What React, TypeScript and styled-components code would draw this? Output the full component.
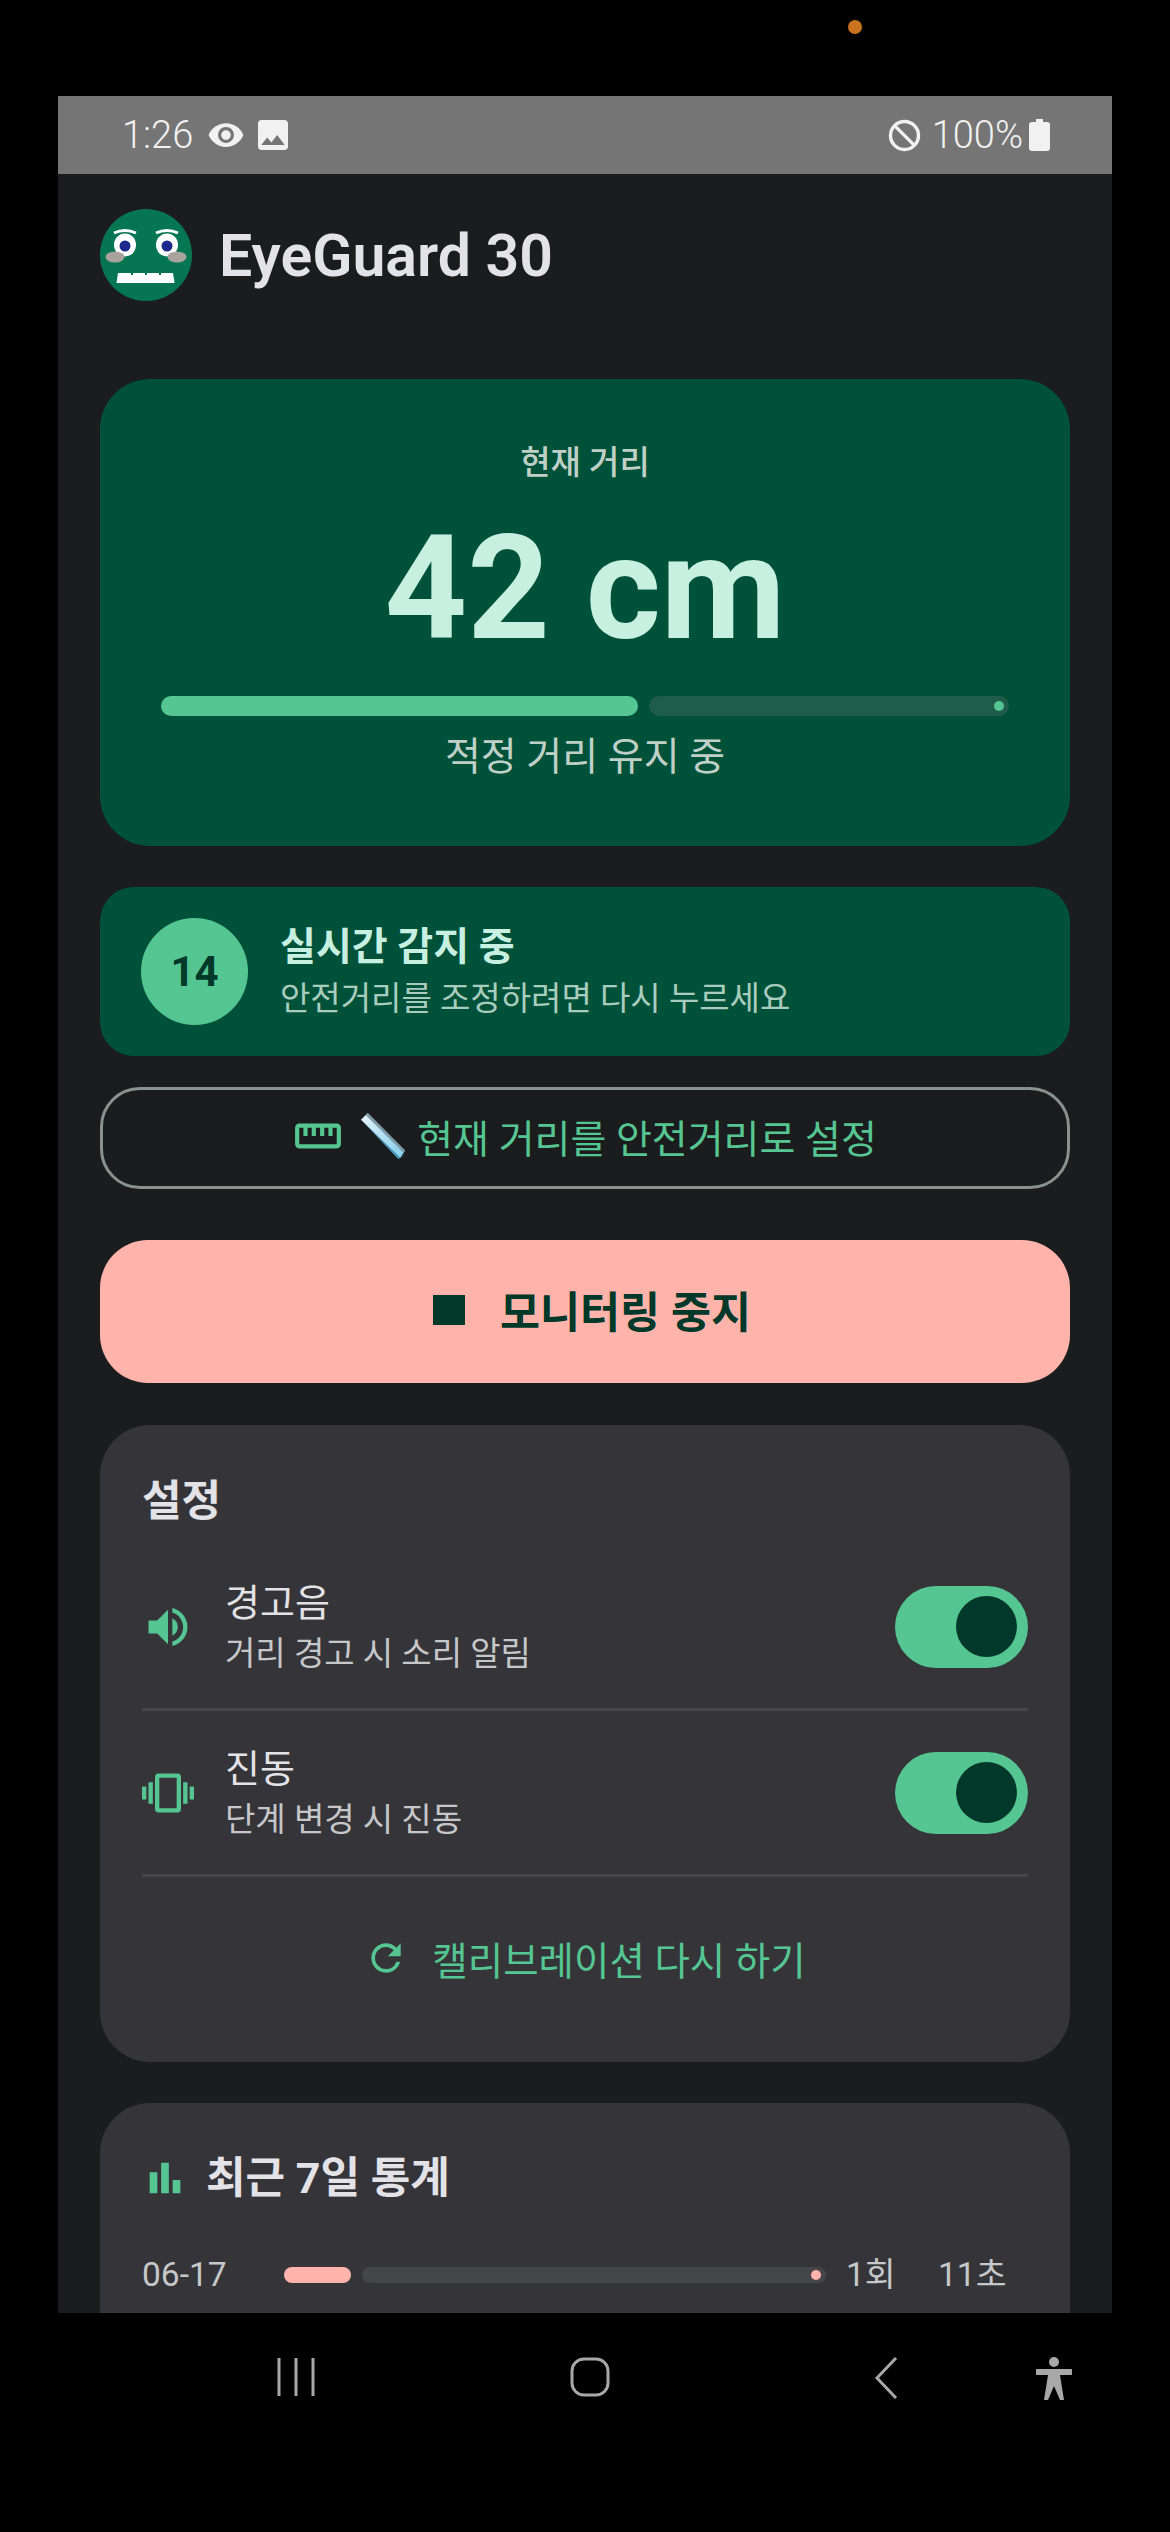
import React from "react";
import styled, { createGlobalStyle } from "styled-components";
import {
  MdBarChart,
  MdImage,
  MdOutlineStraighten,
  MdRefresh,
  MdVibration,
  MdVisibility,
  MdVolumeUp,
} from "react-icons/md";

const GlobalStyle = createGlobalStyle`
  html, body {
    margin: 0;
    padding: 0;
    background: #000;
    font-family: Roboto, "Noto Sans CJK KR", sans-serif;
  }
`;

const Page = styled.div`
  width: 1170px;
  height: 2532px;
  background: #000;
  overflow: hidden;
`;

const Bezel = styled.div`
  height: 96px;
  padding: 20px 0 0 848px;
  box-sizing: border-box;
`;

const CameraDot = styled.div`
  width: 14px;
  height: 14px;
  border-radius: 50%;
  background: #c9731f;
`;

const Phone = styled.div`
  width: 1054px;
  height: 2217px;
  margin-left: 58px;
  overflow: hidden;
  background: #1b1c1e;
`;

const StatusBar = styled.div`
  height: 78px;
  background: #757575;
  color: #f1f1f1;
  display: flex;
  align-items: center;
  justify-content: space-between;
  padding: 0 62px 0 64px;
  font-size: 38px;
  font-weight: 300;
`;

const StatusGroup = styled.div`
  display: flex;
  align-items: center;
  gap: 8px;
`;

const StatusTime = styled.span`
  margin-right: 6px;
`;

const StatusLevel = styled.span`
  margin: 0 -2px 0 3px;
`;

const Main = styled.main`
  padding: 35px 42px 0;
`;

const Header = styled.header`
  display: flex;
  align-items: center;
  gap: 27px;
  margin-bottom: 78px;
`;

const AppTitle = styled.h1`
  margin: 0;
  font-size: 59px;
  font-weight: 600;
  color: #e3e2e6;
`;

const HeroCard = styled.section`
  height: 467px;
  box-sizing: border-box;
  padding: 62px 61px 0;
  border-radius: 50px;
  background: #00513a;
  text-align: center;
`;

const HeroLabel = styled.div`
  font-size: 33px;
  line-height: 44px;
  font-weight: 500;
  color: #bfd0c7;
`;

const HeroValue = styled.div`
  margin-top: 19px;
  font-size: 144px;
  line-height: 170px;
  font-weight: 700;
  color: #c7f0e0;
`;

const Meter = styled.div<{ $gap: number }>`
  display: flex;
  gap: ${(p) => p.$gap}px;
`;

const MeterFill = styled.div<{ $color: string; $height: number; $width: number }>`
  width: ${(p) => p.$width}px;
  height: ${(p) => p.$height}px;
  border-radius: ${(p) => p.$height / 2}px;
  background: ${(p) => p.$color};
`;

const MeterTrack = styled.div<{ $color: string; $height: number }>`
  flex: 1;
  height: ${(p) => p.$height}px;
  border-radius: ${(p) => p.$height / 2}px;
  background: ${(p) => p.$color};
  display: flex;
  align-items: center;
  justify-content: flex-end;
  padding-right: 5px;
`;

const MeterStop = styled.div<{ $color: string }>`
  width: 10px;
  height: 10px;
  border-radius: 50%;
  background: ${(p) => p.$color};
`;

const HeroMeter = styled.div`
  margin-top: 22px;
`;

const HeroCaption = styled.div`
  margin-top: 16px;
  font-size: 39px;
  line-height: 50px;
  color: #bfd0c7;
`;

const DetectCard = styled.section`
  height: 169px;
  box-sizing: border-box;
  margin-top: 41px;
  padding: 0 41px;
  display: flex;
  align-items: center;
  gap: 32px;
  border-radius: 34px;
  background: #00513a;
`;

const CountBadge = styled.div`
  width: 107px;
  height: 107px;
  border-radius: 50%;
  background: #55c692;
  color: #00382a;
  display: flex;
  align-items: center;
  justify-content: center;
  font-size: 42px;
  font-weight: 700;
`;

const DetectText = styled.div`
  padding-top: 3px;
`;

const DetectTitle = styled.div`
  font-size: 39px;
  line-height: 52px;
  font-weight: 600;
  color: #c7f0e0;
`;

const DetectHint = styled.div`
  font-size: 33px;
  line-height: 52px;
  color: #a9cdbd;
`;

const OutlineButton = styled.button`
  display: flex;
  width: 100%;
  height: 102px;
  margin-top: 31px;
  padding: 0 0 5px;
  align-items: center;
  justify-content: center;
  gap: 17px;
  border: 3px solid #8b918d;
  border-radius: 40px;
  background: transparent;
  color: #55c692;
  font-family: inherit;
  font-size: 39px;
`;

const OutlineLabel = styled.span`
  margin-left: -6px;
`;

const StopButton = styled.button`
  display: flex;
  width: 100%;
  height: 143px;
  margin-top: 51px;
  padding: 0 0 4px 14px;
  align-items: center;
  justify-content: center;
  gap: 35px;
  border: none;
  border-radius: 48px;
  background: #ffb4ab;
  color: #00382a;
  font-family: inherit;
  font-size: 43.5px;
  font-weight: 600;
`;

const StopMark = styled.span`
  width: 32px;
  height: 30px;
  background: #00382a;
`;

const Card = styled.section<{ $top: number; $padTop: number }>`
  margin-top: ${(p) => p.$top}px;
  padding: ${(p) => p.$padTop}px 42px 0;
  border-radius: 50px;
  background: #343439;
`;

const CardTitle = styled.h2<{ $gap: number; $bottom: number }>`
  display: flex;
  align-items: center;
  gap: ${(p) => p.$gap}px;
  margin: 0 0 ${(p) => p.$bottom}px;
  font-size: 43px;
  line-height: 64px;
  font-weight: 700;
  color: #e3e2e6;
`;

const ToggleRow = styled.div`
  height: 163px;
  display: flex;
  align-items: center;
  gap: 31px;
  border-bottom: 3px solid #45454a;
`;

const RowIcon = styled.div<{ $width: number }>`
  width: ${(p) => p.$width}px;
  color: #55c692;
  display: flex;
  justify-content: center;
`;

const RowText = styled.div`
  flex: 1;
  padding-top: 3px;
`;

const RowLabel = styled.div`
  font-size: 38px;
  line-height: 53px;
  color: #e3e2e6;
`;

const RowHint = styled.div`
  margin-top: -3px;
  font-size: 33px;
  line-height: 53px;
  color: #c6c7c9;
`;

const Toggle = styled.div`
  width: 133px;
  height: 82px;
  box-sizing: border-box;
  padding-right: 11px;
  border-radius: 41px;
  background: #55c692;
  display: flex;
  align-items: center;
  justify-content: flex-end;
`;

const ToggleThumb = styled.div`
  width: 61px;
  height: 61px;
  border-radius: 50%;
  background: #00382a;
`;

const Recalibrate = styled.div`
  height: 162px;
  padding-bottom: 23px;
  display: flex;
  align-items: center;
  justify-content: center;
  gap: 24px;
  color: #55c692;
  font-size: 38.5px;
`;

const StatRow = styled.div`
  margin-top: 40px;
  padding-bottom: 140px;
  display: flex;
  align-items: center;
  font-size: 33.5px;
  line-height: 50px;
  color: #c6c7c9;
`;

const StatDate = styled.div`
  width: 142px;
`;

const StatMeter = styled.div`
  width: 542px;
`;

const StatCount = styled.div`
  width: 92px;
  margin-left: 20px;
`;

const NavBar = styled.nav`
  height: 219px;
  box-sizing: border-box;
  display: flex;
  color: #a8a8a8;
  padding: 44px 0 0 277px;
  align-items: flex-start;
`;

const NavSlot = styled.div<{ $width: number }>`
  width: ${(p) => p.$width}px;
  flex: none;
`;

const RulerEmoji = () => (
  <svg width="46" height="50" viewBox="0 0 48 50">
    <defs>
      <linearGradient id="rulerFace" x1="0" y1="0" x2="1" y2="0.3">
        <stop offset="0" stopColor="#e6f4fa" />
        <stop offset="1" stopColor="#8fd3f0" />
      </linearGradient>
    </defs>
    <path d="M1 8 L8 1 L47 40 L42 48 Z" fill="url(#rulerFace)" />
    <path d="M1 8 L42 48 L47 44 L45 46 L40 49 Z" fill="#4aa3cf" />
    <path d="M8 1 L47 40 L45 42 L6 3 Z" fill="#7d97a3" />
  </svg>
);

const LogoMark = () => (
  <svg width="92" height="92" viewBox="0 0 92 92">
    <circle cx="46" cy="46" r="46" fill="#067652" />
    <ellipse cx="25" cy="36" rx="11" ry="11.5" fill="#fff" />
    <ellipse cx="67" cy="36" rx="11" ry="11.5" fill="#fff" />
    <circle cx="25" cy="37" r="5.5" fill="#1b2a8c" />
    <circle cx="67" cy="37" r="5.5" fill="#1b2a8c" />
    <path d="M14 24 Q25 19 36 24" stroke="#fff" strokeWidth="3" fill="none" />
    <path d="M56 24 Q67 19 78 24" stroke="#fff" strokeWidth="3" fill="none" />
    <ellipse cx="15" cy="48" rx="9.5" ry="5.5" fill="#a9a29d" />
    <ellipse cx="77" cy="48" rx="9.5" ry="5.5" fill="#a9a29d" />
    <path d="M18 64 h13 v2 h2 v-2 h12 v2 h2 v-2 h12 v2 h2 v-2 h12 l1.5 10 h-58 z" fill="#fff" />
  </svg>
);

const BlockedIcon = () => (
  <svg width="33" height="33" viewBox="0 0 33 33" fill="none" stroke="#f1f1f1" strokeWidth="3.4">
    <circle cx="16.5" cy="16.5" r="14" />
    <path d="M6.6 6.6 L26.4 26.4" />
  </svg>
);

const BatteryIcon = () => (
  <svg width="21" height="32" viewBox="0 0 21 32" fill="#f1f1f1">
    <path d="M7 0 h7 v3 h4 a3 3 0 0 1 3 3 v23 a3 3 0 0 1 -3 3 h-15 a3 3 0 0 1 -3 -3 v-23 a3 3 0 0 1 3 -3 h4 z" />
  </svg>
);

const RecentsIcon = () => (
  <svg width="38" height="40" viewBox="0 0 38 40" fill="none" stroke="currentColor" strokeWidth="3">
    <path d="M2 1 V39 M19 1 V39 M36 1 V39" />
  </svg>
);

const HomeIcon = () => (
  <svg width="40" height="40" viewBox="0 0 40 40" fill="none" stroke="currentColor" strokeWidth="3">
    <rect x="2" y="2" width="36" height="36" rx="12" />
  </svg>
);

const BackIcon = () => (
  <svg width="24" height="42" viewBox="0 0 24 42" fill="none" stroke="currentColor" strokeWidth="3">
    <path d="M22 1 L3 21 L22 41" />
  </svg>
);

const AccessibilityIcon = () => (
  <svg width="36" height="44" viewBox="0 0 36 44" fill="currentColor">
    <circle cx="18" cy="5" r="5" />
    <path d="M1 12 h34 a1.5 3 0 0 1 0 6 h-11 l4 25 h-4 l-6 -14 l-6 14 h-4 l4 -25 h-11 a1.5 3 0 0 1 0 -6 z" />
  </svg>
);

const settings = [
  { icon: <MdVolumeUp size={58} />, label: "경고음", hint: "거리 경고 시 소리 알림" },
  { icon: <MdVibration size={58} />, label: "진동", hint: "단계 변경 시 진동" },
];

export default function App() {
  return (
    <Page>
      <GlobalStyle />
      <Bezel>
        <CameraDot />
      </Bezel>
      <Phone>
        <StatusBar>
          <StatusGroup>
            <StatusTime>1:26</StatusTime>
            <MdVisibility size={38} />
            <MdImage size={40} />
          </StatusGroup>
          <StatusGroup>
            <BlockedIcon />
            <StatusLevel>100%</StatusLevel>
            <BatteryIcon />
          </StatusGroup>
        </StatusBar>
        <Main>
          <Header>
            <LogoMark />
            <AppTitle>EyeGuard 30</AppTitle>
          </Header>

          <HeroCard>
            <HeroLabel>현재 거리</HeroLabel>
            <HeroValue>42 cm</HeroValue>
            <HeroMeter>
              <Meter $gap={11}>
                <MeterFill $color="#55c692" $height={20} $width={477} />
                <MeterTrack $color="#1f5c4b" $height={20}>
                  <MeterStop $color="#55c692" />
                </MeterTrack>
              </Meter>
            </HeroMeter>
            <HeroCaption>적정 거리 유지 중</HeroCaption>
          </HeroCard>

          <DetectCard>
            <CountBadge>14</CountBadge>
            <DetectText>
              <DetectTitle>실시간 감지 중</DetectTitle>
              <DetectHint>안전거리를 조정하려면 다시 누르세요</DetectHint>
            </DetectText>
          </DetectCard>

          <OutlineButton>
            <MdOutlineStraighten size={50} />
            <RulerEmoji />
            <OutlineLabel>현재 거리를 안전거리로 설정</OutlineLabel>
          </OutlineButton>

          <StopButton>
            <StopMark />
            <span>모니터링 중지</span>
          </StopButton>

          <Card $top={42} $padTop={44}>
            <CardTitle $gap={0} $bottom={12}>설정</CardTitle>
            {settings.map((row) => (
              <ToggleRow key={row.label}>
                <RowIcon $width={52}>{row.icon}</RowIcon>
                <RowText>
                  <RowLabel>{row.label}</RowLabel>
                  <RowHint>{row.hint}</RowHint>
                </RowText>
                <Toggle>
                  <ToggleThumb />
                </Toggle>
              </ToggleRow>
            ))}
            <Recalibrate>
              <MdRefresh size={44} />
              <span>캘리브레이션 다시 하기</span>
            </Recalibrate>
          </Card>

          <Card $top={41} $padTop={43}>
            <CardTitle $gap={18} $bottom={0}>
              <RowIcon $width={46}>
                <MdBarChart size={50} />
              </RowIcon>
              최근 7일 통계
            </CardTitle>
            <StatRow>
              <StatDate>06-17</StatDate>
              <StatMeter>
                <Meter $gap={11}>
                  <MeterFill $color="#ffb4ab" $height={16} $width={67} />
                  <MeterTrack $color="#45464a" $height={16}>
                    <MeterStop $color="#ffb4ab" />
                  </MeterTrack>
                </Meter>
              </StatMeter>
              <StatCount>1회</StatCount>
              <div>11초</div>
            </StatRow>
          </Card>
        </Main>
      </Phone>
      <NavBar>
        <NavSlot $width={293}>
          <RecentsIcon />
        </NavSlot>
        <NavSlot $width={304}>
          <HomeIcon />
        </NavSlot>
        <NavSlot $width={162}>
          <BackIcon />
        </NavSlot>
        <AccessibilityIcon />
      </NavBar>
    </Page>
  );
}
